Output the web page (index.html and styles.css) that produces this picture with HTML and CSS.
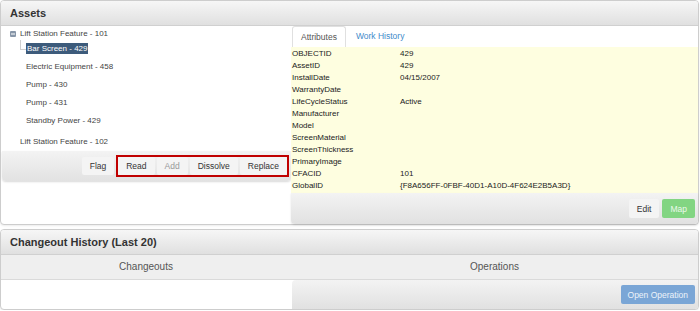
FILE: index.html
```html
<!DOCTYPE html>
<html lang="en">
<head>
    <meta charset="UTF-8">
    <title>Assets</title>
    <link rel="stylesheet" href="styles.css">
</head>
<body>

    <div class="panel assets">
        <div class="panel-heading">Assets</div>
        <div class="split">
            <div class="pane-left">
                <div class="tree">
                    <div class="tree-root">
                        <svg class="toggle" width="6" height="6" viewBox="0 0 6 6">
                            <rect x="0" y="0" width="6" height="6" rx="1" fill="#8796a8"/>
                            <rect x="1" y="2.5" width="4" height="1" fill="#fff"/>
                        </svg>
                        Lift Station Feature - 101
                    </div>
                    <ul class="tree-children">
                        <li class="first"><span class="selected">Bar Screen - 429</span></li>
                        <li>Electric Equipment - 458</li>
                        <li>Pump - 430</li>
                        <li>Pump - 431</li>
                        <li>Standby Power - 429</li>
                    </ul>
                    <div class="tree-root second">Lift Station Feature - 102</div>
                </div>
                <div class="toolbar">
                    <button class="btn">Flag</button>
                    <div class="btn-group highlight">
                        <button class="btn">Read</button>
                        <button class="btn disabled">Add</button>
                        <button class="btn">Dissolve</button>
                        <button class="btn">Replace</button>
                    </div>
                </div>
            </div>

            <div class="pane-right">
                <div class="tabs">
                    <span class="tab active">Attributes</span>
                    <span class="tab">Work History</span>
                </div>
                <div class="attrs">
                    <table>
                        <tr><td>OBJECTID</td><td>429</td></tr>
                        <tr><td>AssetID</td><td>429</td></tr>
                        <tr><td>InstallDate</td><td>04/15/2007</td></tr>
                        <tr><td>WarrantyDate</td><td></td></tr>
                        <tr><td>LifeCycleStatus</td><td>Active</td></tr>
                        <tr><td>Manufacturer</td><td></td></tr>
                        <tr><td>Model</td><td></td></tr>
                        <tr><td>ScreenMaterial</td><td></td></tr>
                        <tr><td>ScreenThickness</td><td></td></tr>
                        <tr><td>PrimaryImage</td><td></td></tr>
                        <tr><td>CFACID</td><td>101</td></tr>
                        <tr><td>GlobalID</td><td>{F8A656FF-0FBF-40D1-A10D-4F624E2B5A3D}</td></tr>
                    </table>
                </div>
                <div class="footer-bar">
                    <button class="btn">Edit</button>
                    <button class="btn btn-green">Map</button>
                </div>
            </div>
        </div>
    </div>

    <div class="panel history">
        <div class="panel-heading">Changeout History (Last 20)</div>
        <div class="split sub-heading">
            <div>Changeouts</div>
            <div>Operations</div>
        </div>
        <div class="split history-body">
            <div class="pane-left"></div>
            <div class="footer-bar top-round">
                <button class="btn btn-blue">Open Operation</button>
            </div>
        </div>
    </div>

</body>
</html>
```

FILE: styles.css
```css
* {
    box-sizing: border-box;
}
body {
    margin: 0;
    width: 700px;
    background-color: #fff;
    font-family: "Liberation Sans", Arial, sans-serif;
    color: #333;
}
.panel {
    width: 699px;
    border: 1px solid #cdcdcd;
    border-radius: 4px;
    background-color: #fff;
    box-shadow: 0 1px 2px rgba(0,0,0,0.08);
}
.panel + .panel {
    margin-top: 4px;
}
.panel-heading {
    height: 25px;
    padding: 0 9px;
    line-height: 24px;
    font-size: 11px;
    font-weight: bold;
    color: #333;
    background: linear-gradient(#f6f6f6, #e0e0e0);
    border-bottom: 1px solid #d0d0d0;
    border-radius: 3px 3px 0 0;
}
.split {
    display: grid;
    grid-template-columns: 290px 1fr;
}
.assets .split {
    height: 198px;
}

/* tree */
.pane-left {
    display: flex;
    flex-direction: column;
}
.tree {
    height: 125px;
    padding-top: 2px;
    font-size: 8px;
    color: #444;
}
.tree-root {
    display: flex;
    align-items: center;
    padding-left: 9px;
    line-height: 12px;
}
.toggle {
    margin-right: 4px;
}
.tree-root.second {
    margin-top: 3px;
    padding-left: 19px;
    line-height: 18px;
}
.tree-children {
    list-style: none;
    margin: 0;
    padding: 0 0 0 25px;
}
.tree-children li {
    position: relative;
    line-height: 18px;
}
.tree-children li.first::before {
    content: "";
    position: absolute;
    left: -6px;
    top: 0;
    width: 5px;
    height: 9px;
    border-left: 1px solid #d0d0d0;
    border-bottom: 1px solid #d0d0d0;
}
.selected {
    padding: 1px;
    line-height: 11px;
    background-color: #3d5b7b;
    color: #fff;
}

/* buttons */
.btn {
    height: 18px;
    padding: 0 8px;
    border: none;
    border-radius: 2px;
    background-color: #f4f4f4;
    font-family: inherit;
    font-size: 8.5px;
    color: #333;
}
.btn.disabled {
    color: #999;
}
.btn-green {
    background-color: #82d582;
    color: #ecf9ec;
}
.btn-blue {
    background-color: #7aa6d6;
    color: #edf3fa;
    padding: 0 7px;
}
.toolbar {
    height: 30px;
    margin-left: 1px;
    padding-right: 2px;
    display: flex;
    justify-content: flex-end;
    align-items: center;
    gap: 2px;
    background: linear-gradient(#f3f3f3, #e2e2e2);
    border-radius: 0 0 4px 4px;
    box-shadow: 0 1px 2px rgba(0,0,0,0.15);
}
.btn-group {
    display: flex;
    gap: 2px;
}
.btn-group.highlight {
    border: 2px solid #c00000;
}

/* right pane */
.pane-right {
    display: flex;
    flex-direction: column;
}
.tabs {
    height: 21px;
    display: flex;
    align-items: flex-end;
    padding-left: 1px;
}
.tab {
    height: 21px;
    padding: 0 8px;
    margin-right: 2px;
    line-height: 20px;
    font-size: 8.5px;
    color: #428bca;
}
.tab.active {
    color: #555;
    background-color: #fff;
    border: 1px solid #e0e0e0;
    border-bottom: none;
    border-radius: 3px 3px 0 0;
}
.attrs {
    height: 146px;
    padding: 1px 0;
    background-color: #fefee0;
}
.attrs table {
    border-collapse: collapse;
    font-size: 8px;
    color: #222;
}
.attrs td {
    padding: 0 0 0 1px;
    height: 12px;
    line-height: 12px;
}
.attrs td:first-child {
    width: 108px;
}
.footer-bar {
    flex: 1;
    display: flex;
    justify-content: flex-end;
    align-items: center;
    gap: 3px;
    padding-right: 3px;
    background: linear-gradient(#f3f3f3, #e1e1e1);
    border-radius: 0 0 4px 4px;
    box-shadow: 0 1px 2px rgba(0,0,0,0.12);
}
.btn-green, .footer-bar .btn {
    height: 19px;
}

/* history */
.sub-heading {
    height: 25px;
    line-height: 24px;
    font-size: 10px;
    color: #555;
    text-align: center;
    background-color: #efefef;
    border-bottom: 1px solid #dadada;
}
.history-body {
    height: 29px;
}
.footer-bar.top-round {
    margin-left: 1px;
    border-radius: 4px 0 3px 0;
    box-shadow: none;
}
```
